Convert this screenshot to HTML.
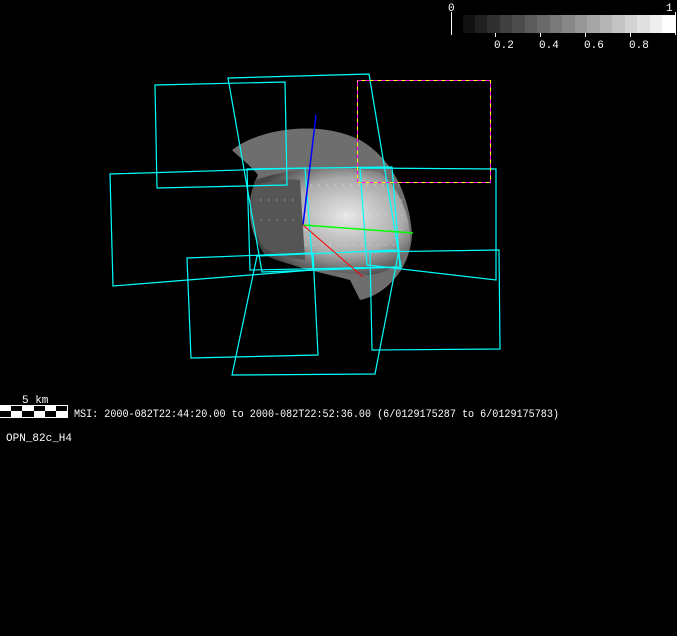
<!DOCTYPE html><html><head><style>
body{margin:0;background:#000;width:677px;height:636px;overflow:hidden}
svg{position:absolute;left:0;top:0}
text{font-family:"Liberation Mono",monospace;font-size:11px;fill:#fff}
</style></head><body>
<svg width="677" height="636" xmlns="http://www.w3.org/2000/svg">
<defs>
<radialGradient id="g1" cx="0.6" cy="0.45" r="0.6"><stop offset="0" stop-color="#e8e8e8"/><stop offset="0.6" stop-color="#aaa"/><stop offset="1" stop-color="#444"/></radialGradient>
</defs>
<g>
<rect x="463" y="15" width="13" height="18" fill="#111"/><rect x="475" y="15" width="13" height="18" fill="#202020"/><rect x="487" y="15" width="13" height="18" fill="#303030"/><rect x="500" y="15" width="13" height="18" fill="#404040"/><rect x="512" y="15" width="13" height="18" fill="#4c4c4c"/><rect x="525" y="15" width="13" height="18" fill="#5c5c5c"/><rect x="537" y="15" width="13" height="18" fill="#6a6a6a"/><rect x="550" y="15" width="13" height="18" fill="#7a7a7a"/><rect x="562" y="15" width="13" height="18" fill="#888"/><rect x="575" y="15" width="13" height="18" fill="#979797"/><rect x="587" y="15" width="13" height="18" fill="#a6a6a6"/><rect x="600" y="15" width="13" height="18" fill="#b4b4b4"/><rect x="612" y="15" width="13" height="18" fill="#c3c3c3"/><rect x="625" y="15" width="13" height="18" fill="#d2d2d2"/><rect x="637" y="15" width="13" height="18" fill="#e0e0e0"/><rect x="650" y="15" width="13" height="18" fill="#efefef"/><rect x="662" y="15" width="14" height="18" fill="#fff"/>
<line x1="451.5" y1="12" x2="451.5" y2="35" stroke="#fff"/>
<line x1="675.5" y1="12" x2="675.5" y2="35" stroke="#fff"/>
<line x1="495.5" y1="33" x2="495.5" y2="37" stroke="#fff"/><line x1="540.5" y1="33" x2="540.5" y2="37" stroke="#fff"/><line x1="585.5" y1="33" x2="585.5" y2="37" stroke="#fff"/><line x1="630.5" y1="33" x2="630.5" y2="37" stroke="#fff"/>
<text x="448" y="11">0</text><text x="666" y="11">1</text>
<text x="494" y="48">0.2</text><text x="539" y="48">0.4</text><text x="584" y="48">0.6</text><text x="629" y="48">0.8</text>
</g>
<path d="M232,150 C260,128 320,120 360,140 C395,160 410,200 412,235 C410,270 385,295 360,300 L350,280 C320,272 280,265 262,250 C248,230 245,200 258,175 C250,165 240,158 232,150Z" fill="#6e6e6e"/>
<path d="M255,180 C290,168 340,165 380,172 C400,190 410,215 410,240 C405,262 390,272 370,275 C330,272 290,268 265,255 C250,235 248,205 255,180Z" fill="url(#g1)"/>
<path d="M255,185 C275,180 290,178 300,180 L305,260 C285,258 268,252 262,245 C250,225 250,200 255,185Z" fill="#555"/>
<g stroke="#fff" stroke-opacity="0.35" stroke-dasharray="2 6">
<line x1="310" y1="185" x2="405" y2="185"/><line x1="305" y1="200" x2="408" y2="200"/><line x1="305" y1="215" x2="408" y2="215"/><line x1="305" y1="230" x2="405" y2="230"/><line x1="305" y1="245" x2="395" y2="245"/><line x1="260" y1="200" x2="300" y2="200"/><line x1="260" y1="220" x2="300" y2="220"/></g>
<g fill="none" stroke="#0ff" stroke-width="1.2">
<polygon points="155,85 285,82 287,185 157,188"/>
<polygon points="228,78 369,74 401,267 262,272"/>
<polygon points="110,174 305,168 313,270 113,286"/>
<polygon points="247,169 392,167 400,267 250,270"/>
<polygon points="360,168 496,169 496,280 367,265"/>
<polygon points="187,258 313,253 318,355 191,358"/>
<polygon points="257,256 399,250 375,374 232,375"/>
<polygon points="370,252 499,250 500,349 372,350"/>
</g>
<rect x="357.5" y="80.5" width="133" height="102" fill="none" stroke="#ff0" stroke-width="1"/>
<rect x="357.5" y="80.5" width="133" height="102" fill="none" stroke="#f0f" stroke-width="1" stroke-dasharray="4 4"/>
<line x1="316" y1="115" x2="303" y2="225" stroke="#00f" stroke-width="1.5"/>
<line x1="303" y1="225" x2="413" y2="233" stroke="#0f0" stroke-width="1.5"/>
<line x1="303" y1="225" x2="363" y2="277" stroke="#f00" stroke-width="1"/>
<text x="22" y="403">5 km</text>
<rect x="0.5" y="405.5" width="67" height="12" fill="#fff" stroke="#fff"/>
<rect x="11" y="406" width="11" height="5" fill="#000"/><rect x="34" y="406" width="11" height="5" fill="#000"/><rect x="56" y="406" width="11" height="5" fill="#000"/>
<rect x="0" y="411" width="11" height="6" fill="#000"/><rect x="22" y="411" width="12" height="6" fill="#000"/><rect x="45" y="411" width="11" height="6" fill="#000"/>
<text x="74" y="417" textLength="485" lengthAdjust="spacingAndGlyphs">MSI:  2000-082T22:44:20.00 to 2000-082T22:52:36.00 (6/0129175287 to 6/0129175783)</text>
<text x="6" y="441">OPN_82c_H4</text>
</svg>
</body></html>
